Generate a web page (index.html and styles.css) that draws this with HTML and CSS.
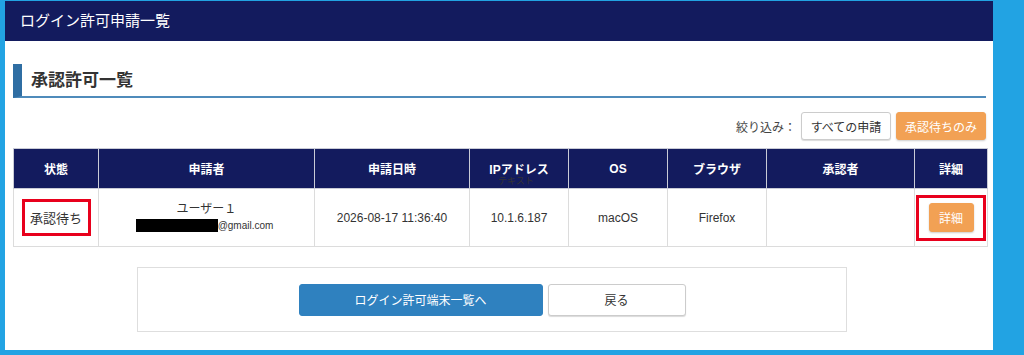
FILE: index.html
```html
<!DOCTYPE html>
<html lang="ja">
<head>
  <meta charset="UTF-8">
  <title>ログイン許可申請一覧</title>
  <link rel="stylesheet" href="styles.css">
</head>
<body>
  <div class="panel">
    <div class="pageHeader">ログイン許可申請一覧</div>

    <div class="content">
      <h2 class="sectionTitle">承認許可一覧</h2>

      <div class="filterRow">
        <span class="filterLabel">絞り込み：</span>
        <button class="btn btnWhite filterBtn">すべての申請</button>
        <button class="btn btnOrange filterBtn">承認待ちのみ</button>
      </div>

      <table class="listTable">
        <colgroup>
          <col style="width: 85px">
          <col style="width: 216px">
          <col style="width: 155px">
          <col style="width: 99px">
          <col style="width: 99px">
          <col style="width: 99px">
          <col style="width: 148px">
          <col style="width: 73px">
        </colgroup>
        <thead>
          <tr>
            <th>状態</th>
            <th>申請者</th>
            <th>申請日時</th>
            <th>IPアドレス<span class="ghostText">テキスト</span></th>
            <th>OS</th>
            <th>ブラウザ</th>
            <th>承認者</th>
            <th>詳細</th>
          </tr>
        </thead>
        <tbody>
          <tr>
            <td><span class="mark markText">承認待ち</span></td>
            <td>
              <div class="userName">ユーザー１</div>
              <div class="userMail"><span class="redact"></span>@gmail.com</div>
            </td>
            <td>2026-08-17 11:36:40</td>
            <td>10.1.6.187</td>
            <td>macOS</td>
            <td>Firefox</td>
            <td></td>
            <td><span class="mark markBtn"><button class="btn btnOrange detailBtn">詳細</button></span></td>
          </tr>
        </tbody>
      </table>

      <div class="actionBox">
        <button class="btn btnBlue actionBtn wide">ログイン許可端末一覧へ</button>
        <button class="btn btnWhite actionBtn">戻る</button>
      </div>
    </div>
  </div>
</body>
</html>
```

FILE: styles.css
```css
body {
  margin: 0;
  background-color: #22a3e3;
  font-family: "Liberation Sans", "Noto Sans CJK JP", sans-serif;
  color: #333;
  height: 355px;
  overflow: hidden;
}

.panel {
  margin: 1px 0 0 5px;
  width: 988px;
  height: 349px;
  background-color: #fff;
}

.pageHeader {
  height: 40px;
  line-height: 40px;
  background-color: #131b5e;
  color: #fff;
  font-size: 15px;
  padding-left: 15px;
}

.content {
  padding: 23px 7px 0 8px;
}

.sectionTitle {
  margin: 0;
  height: 32px;
  line-height: 33px;
  border-left: 9px solid #2f6ea3;
  border-bottom: 2px solid #4f8bbb;
  padding-left: 9px;
  font-size: 17px;
  font-weight: bold;
  color: #333;
}

.filterRow {
  display: flex;
  justify-content: flex-end;
  align-items: center;
  gap: 5px;
  margin-top: 14px;
}

.filterLabel {
  font-size: 12px;
  color: #444;
}

.btn {
  font-family: "Liberation Sans", "Noto Sans CJK JP", sans-serif;
  border-radius: 3px;
  cursor: pointer;
  font-size: 12px;
  padding: 0;
}

.btnWhite {
  background-color: #fff;
  border: 1px solid #ccc;
  color: #333;
  box-shadow: 0 1px 1px rgba(0, 0, 0, 0.15);
}

.btnOrange {
  background-color: #f2a154;
  border: 1px solid #f2a154;
  color: #fff;
  box-shadow: 0 1px 2px rgba(0, 0, 0, 0.2);
}

.btnBlue {
  background-color: #2f81bf;
  border: 1px solid #2f81bf;
  color: #fff;
}

.filterBtn {
  height: 28px;
  width: 90px;
}

.listTable {
  margin-top: 8px;
  width: 974px;
  border-collapse: collapse;
  table-layout: fixed;
  font-size: 12px;
}

.listTable th,
.listTable td {
  padding: 0;
  box-sizing: border-box;
}

.listTable th {
  background-color: #131b5e;
  color: #fff;
  height: 40px;
  font-weight: bold;
  border: 1px solid #c9cbd6;
  position: relative;
}

.listTable td {
  height: 58px;
  text-align: center;
  border: 1px solid #dcdcdc;
  color: #333;
}

.ghostText {
  position: absolute;
  left: 28px;
  top: 25px;
  font-size: 9px;
  font-weight: normal;
  color: #333;
}

.mark {
  display: inline-flex;
  align-items: center;
  justify-content: center;
  border: 3px solid #e8001c;
  box-sizing: border-box;
  vertical-align: middle;
}

.markText {
  width: 69px;
  height: 37px;
  font-size: 13px;
}

.markBtn {
  width: 70px;
  height: 46px;
}

.detailBtn {
  width: 45px;
  height: 29px;
  font-size: 12px;
}

.userName {
  font-size: 12px;
  margin-top: -4px;
}

.userMail {
  font-size: 10px;
  display: flex;
  justify-content: center;
  align-items: center;
  margin-top: 3px;
  margin-left: -4px;
}

.redact {
  display: inline-block;
  width: 82px;
  height: 13px;
  background-color: #000;
}

.actionBox {
  margin: 20px 0 0 124px;
  width: 708px;
  height: 63px;
  border: 1px solid #dedede;
  display: flex;
  justify-content: center;
  align-items: center;
  gap: 5px;
}

.actionBtn {
  width: 138px;
  height: 32px;
}

.actionBtn.wide {
  width: 244px;
}
```
